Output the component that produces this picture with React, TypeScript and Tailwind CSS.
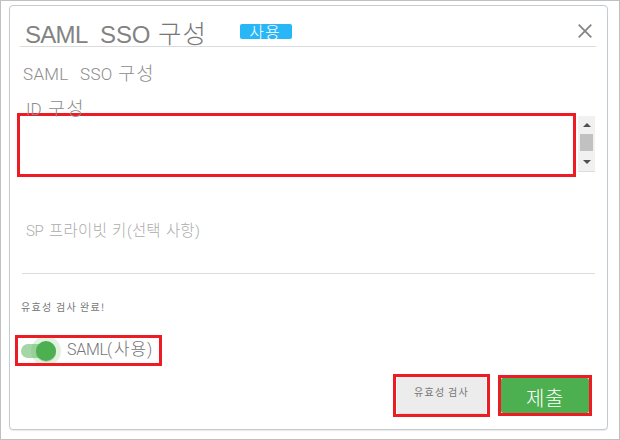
import React from "react";

const latin = "font-['Liberation_Sans','Noto_Sans_CJK_KR',sans-serif]";
const latinLight = "font-['Roboto','Liberation_Sans',sans-serif] font-light";
const korean = "font-['Noto_Sans_CJK_KR',sans-serif] font-light";
const koreanSmall = "font-['Noto_Sans_CJK_KR',sans-serif] font-normal";

function Header() {
  return (
    <header className="ml-[10px] flex h-[41px] w-[576px] items-start border-b border-[#d9dbdc]">
      <h1 className="flex h-[40px] w-[220px] items-baseline pl-[5px] pt-[12px] text-[24px] font-normal leading-[27px] text-[#838383]">
        <span className="w-[75px] tracking-[-0.7px]">SAML</span>
        <span className="w-[58px] tracking-[-0.1px]">SSO</span>
        <span className={`${korean} text-[25.5px] tracking-[1px] text-[#777777]`}>구성</span>
      </h1>
      <span className={`${korean} mt-[18px] flex h-[15px] w-[52px] items-center justify-center rounded-[2px] bg-[#29b6f6] pr-[2px] text-[16px] leading-[15px] tracking-[1px] text-white`}>
        사용
      </span>
      <button aria-label="닫기" className="ml-[286px] mt-[18px]">
        <svg width="14" height="14" viewBox="0 0 14 14" stroke="#858585" strokeWidth="1.8" fill="none">
          <path d="M.7.7 13.3 13.3M13.3.7.7 13.3" />
        </svg>
      </button>
    </header>
  );
}

function ScrollBar() {
  return (
    <div className="ml-[2px] mt-[3px] flex h-[56px] w-[17px] flex-col items-center border-b border-[#dcdcdc] bg-[#f1f1f1]">
      <svg className="mt-[7px]" width="8" height="4" viewBox="0 0 7 4" fill="#505050" preserveAspectRatio="none">
        <path d="M0 4 3.5 0 7 4Z" />
      </svg>
      <div className="mt-[7px] h-[17px] w-[13px] bg-[#c1c1c1]" />
      <svg className="mt-[9px]" width="8" height="4" viewBox="0 0 7 4" fill="#505050" preserveAspectRatio="none">
        <path d="M0 0H7L3.5 4Z" />
      </svg>
    </div>
  );
}

export default function App() {
  return (
    <main className={`${latin} h-[440px] w-[620px] overflow-hidden border border-[#c0c0c0] bg-white pl-[8px] pt-[4px]`}>
      <section className="flex h-[425px] w-[599px] flex-col rounded-[4px] border border-[#c3cbcf] bg-white shadow-[0_1px_1px_rgba(0,0,0,0.08)]">
        <Header />
        <h2 className="flex h-[42px] items-baseline pl-[13px] pt-[15px] text-[17px] leading-[20px] text-[#8c8c8c]">
          <span className={`${latinLight} w-[57px] tracking-[0.3px]`}>SAML</span>
          <span className={`${latinLight} w-[38px] tracking-[0.3px]`}>SSO</span>
          <span className={`${korean} text-[18.5px] tracking-[1.4px]`}>구성</span>
        </h2>
        <label className="relative z-10 flex h-[24px] items-baseline pl-[16px] pt-[8px] text-[17px] leading-[20px] text-[#8c8c8c]">
          <span className={`${latinLight} w-[22px]`}>ID</span>
          <span className={`${korean} text-[18.5px] tracking-[1.4px]`}>구성</span>
        </label>
        <div className="flex h-[64px] pl-[7px]">
          <div className="h-[64px] w-[559px] border-[3px] border-[#ed1c24] bg-white" />
          <ScrollBar />
        </div>
        <div className="ml-[12px] flex h-[97px] w-[573px] items-baseline border-b border-[#dcdddd] pl-[4px] pt-[41px] text-[15px] leading-[22px] text-[#acacac]">
          <span className={`${latinLight} w-[23px] tracking-[-0.4px]`}>SP</span>
          <span className={`${korean} w-[63px] text-[15.5px] tracking-[0.3px]`}>프라이빗</span>
          <span className={`${korean} w-[15px] text-[15.5px]`}>키</span>
          <span className={`${latinLight} w-[5px]`}>(</span>
          <span className={`${korean} w-[34px] text-[15.5px]`}>선택</span>
          <span className={`${korean} w-[29px] text-[15.5px]`}>사항</span>
          <span className={latinLight}>)</span>
        </div>
        <p className={`${koreanSmall} flex h-[61px] items-start pl-[11px] pt-[25px] text-[10px] leading-[16px] tracking-[1.3px] text-[#777777]`}>
          <span className="w-[35px]">유효성</span>
          <span className="w-[24px]">검사</span>
          <span>완료!</span>
        </p>
        <div className="ml-[5px] flex h-[31px] w-[147px] items-center border-[3px] border-[#ed1c24]">
          <svg className="shrink-0" width="44" height="25" viewBox="0 0 44 25">
            <rect x="3" y="6" width="35" height="14" rx="7" fill="#a5d6a7" />
            <circle cx="28" cy="13" r="15" fill="#4caf50" fillOpacity=".17" />
            <circle cx="28" cy="13.8" r="10.2" fill="#388e3c" fillOpacity=".3" />
            <circle cx="28" cy="13" r="10" fill="#4caf50" />
          </svg>
          <span className="-mt-[3px] ml-[5px] flex items-baseline whitespace-nowrap text-[16px] leading-[22px] text-[#757575]">
            <span className={`${latinLight} w-[40px] tracking-[-0.3px]`}>SAML</span>
            <span className={`${latinLight} w-[7px]`}>(</span>
            <span className={`${korean} w-[33px] text-[17px] tracking-[0.8px]`}>사용</span>
            <span className={latinLight}>)</span>
          </span>
        </div>
        <footer className="flex items-start pl-[383px] pt-[8px]">
          <div className="flex h-[43px] w-[97px] border-[3px] border-[#ed1c24] bg-white">
            <button className={`${koreanSmall} ml-px flex h-[36px] w-[89px] items-start rounded-[3px] bg-[#ececec] pl-[17px] pt-[7px] text-[10px] leading-[16px] tracking-[1.3px] text-[#777777] shadow-[0_1px_1px_rgba(0,0,0,0.15)]`}>
              <span className="w-[34px] shrink-0 text-left">유효성</span>
              <span className="shrink-0">검사</span>
            </button>
          </div>
          <div className="ml-[8px] mt-px h-[41px] w-[94px] border-[3px] border-[#ed1c24] bg-white">
            <button className={`${korean} flex h-[35px] w-[88px] items-start rounded-[2px] bg-[#4caf50] pl-[25px] pt-[7px] text-[20px] leading-[25px] tracking-[0.6px] text-white`}>
              제출
            </button>
          </div>
        </footer>
      </section>
    </main>
  );
}
